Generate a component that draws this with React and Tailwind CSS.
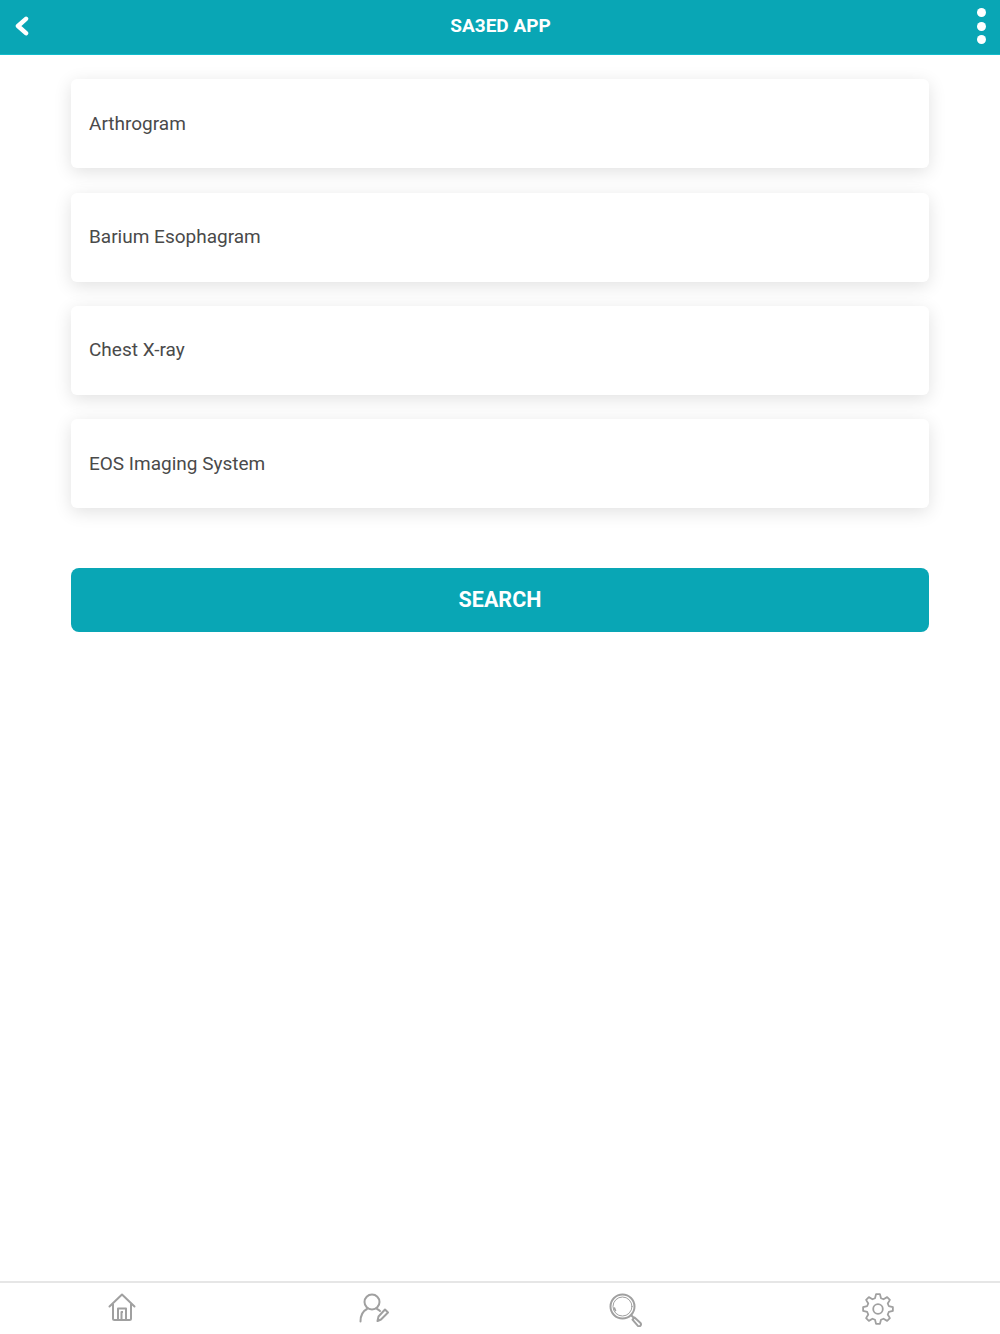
const items = ['Arthrogram', 'Barium Esophagram', 'Chest X-ray', 'EOS Imaging System'];

// eight-toothed outline for the settings icon
const gearPath = () => {
  const cx = 16;
  const cy = 16;
  const parts = [];
  for (let i = 0; i < 8; i++) {
    const a = (i * Math.PI) / 4 - Math.PI / 2;
    const pt = (r, d) => {
      const t = a + d;
      return `${(cx + r * Math.cos(t)).toFixed(2)} ${(cy + r * Math.sin(t)).toFixed(2)}`;
    };
    parts.push(`${i === 0 ? 'M' : 'L'}${pt(11.2, -0.27)}`);
    parts.push(`L${pt(15, -0.13)}`);
    parts.push(`L${pt(15, 0.13)}`);
    parts.push(`L${pt(11.2, 0.27)}`);
  }
  return parts.join(' ') + ' Z';
};

const HomeIcon = () => (
  <svg width="28" height="29" viewBox="0 0 28 29" fill="none" stroke="#a0a0a0" strokeWidth="2" strokeLinejoin="round">
    <path d="M1.500 13.500 14 1.500l12.500 12" strokeLinecap="round" />
    <path d="M5 11v14.500a1.500 1.500 0 0 0 1.500 1.500h15a1.500 1.500 0 0 0 1.500-1.500V11" />
    <path d="M10 27V15.500h8V27M13.500 27v-8h1.500" />
  </svg>
);

const UserEditIcon = () => (
  <svg width="30" height="30" viewBox="0 0 30 30" fill="none" stroke="#a0a0a0" strokeWidth="2" strokeLinecap="round" strokeLinejoin="round">
    <circle cx="13" cy="9" r="7.500" />
    <path d="M1.500 28.500c0-6 2.500-10.500 6.500-12.500" />
    <path d="M18 16c1.200.5 2.200 1.200 3 2" />
    <path d="m18.500 28 1-4.500 6.500-7 3 3-7 7z" />
  </svg>
);

const SearchIcon = () => (
  <svg width="34" height="34" viewBox="0 0 34 34" fill="none" stroke="#a0a0a0" strokeLinecap="round" strokeLinejoin="round">
    <circle cx="13.500" cy="13.500" r="12" strokeWidth="2" />
    <circle cx="13.500" cy="13.500" r="9.500" strokeWidth="1" />
    <path d="M5.500 15c.2 1 .5 1.800 1 2.500" strokeWidth="1.600" />
    <path d="M22.500 22.500 25 25" strokeWidth="2" />
    <path d="m25.500 24.500 6 5.500a1.900 1.900 0 0 1-2.800 2.600l-5.200-6z" strokeWidth="2" />
  </svg>
);

const GearIcon = () => (
  <svg width="32" height="32" viewBox="0 0 32 32" fill="none" stroke="#a0a0a0" strokeWidth="1.800" strokeLinejoin="round">
    <path d={gearPath()} />
    <circle cx="16" cy="16" r="4.800" />
  </svg>
);

const App = () => {
  return (
    <div className="flex h-[1334px] flex-col overflow-hidden bg-white font-['Roboto',sans-serif]">
      {/* Header */}
      <header className="flex h-[55px] items-center border-b border-[#13bccb] bg-[#09a6b5] pl-[15px] pr-[14px]">
        <div className="flex-1">
          <svg width="14" height="20" viewBox="0 0 14 20" fill="none" stroke="white" strokeWidth="4.500" strokeLinecap="round" strokeLinejoin="round" className="mb-[3px]">
            <path d="M11 2.800 3 10l8 7.200" />
          </svg>
        </div>
        <h1 className="mb-[1px] text-[19px] font-bold text-white">SA3ED APP</h1>
        <div className="flex flex-1 justify-end">
          <div className="mb-[2px] flex flex-col gap-[4.500px]">
            <span className="h-[9px] w-[9px] rounded-full bg-white" />
            <span className="h-[9px] w-[9px] rounded-full bg-white" />
            <span className="h-[9px] w-[9px] rounded-full bg-white" />
          </div>
        </div>
      </header>

      {/* List */}
      <main className="flex-1 px-[71px] pt-[24.330px]">
        <div className="flex flex-col gap-[24.330px]">
          {items.map((item) => (
            <div
              key={item}
              className="flex h-[89px] items-center rounded-md bg-white px-[18px] text-[19px] text-[#4a4a4a] shadow-[0_4px_18px_rgba(0,0,0,0.12)]"
            >
              {item}
            </div>
          ))}
        </div>
        <button className="mt-[60px] flex h-[64px] w-full items-center justify-center rounded-lg bg-[#09a6b5] text-[21.500px] font-bold text-white">
          SEARCH
        </button>
      </main>

      {/* Bottom nav */}
      <nav className="-mx-1 grid h-[53px] grid-cols-4 items-start border-t-2 border-[#e6e6e6]">
        <div className="flex justify-center pt-[10px]"><HomeIcon /></div>
        <div className="flex justify-center pt-[10px]"><UserEditIcon /></div>
        <div className="flex justify-center pt-[10px]"><SearchIcon /></div>
        <div className="flex justify-center pt-[10px]"><GearIcon /></div>
      </nav>
    </div>
  );
};

export default App;
